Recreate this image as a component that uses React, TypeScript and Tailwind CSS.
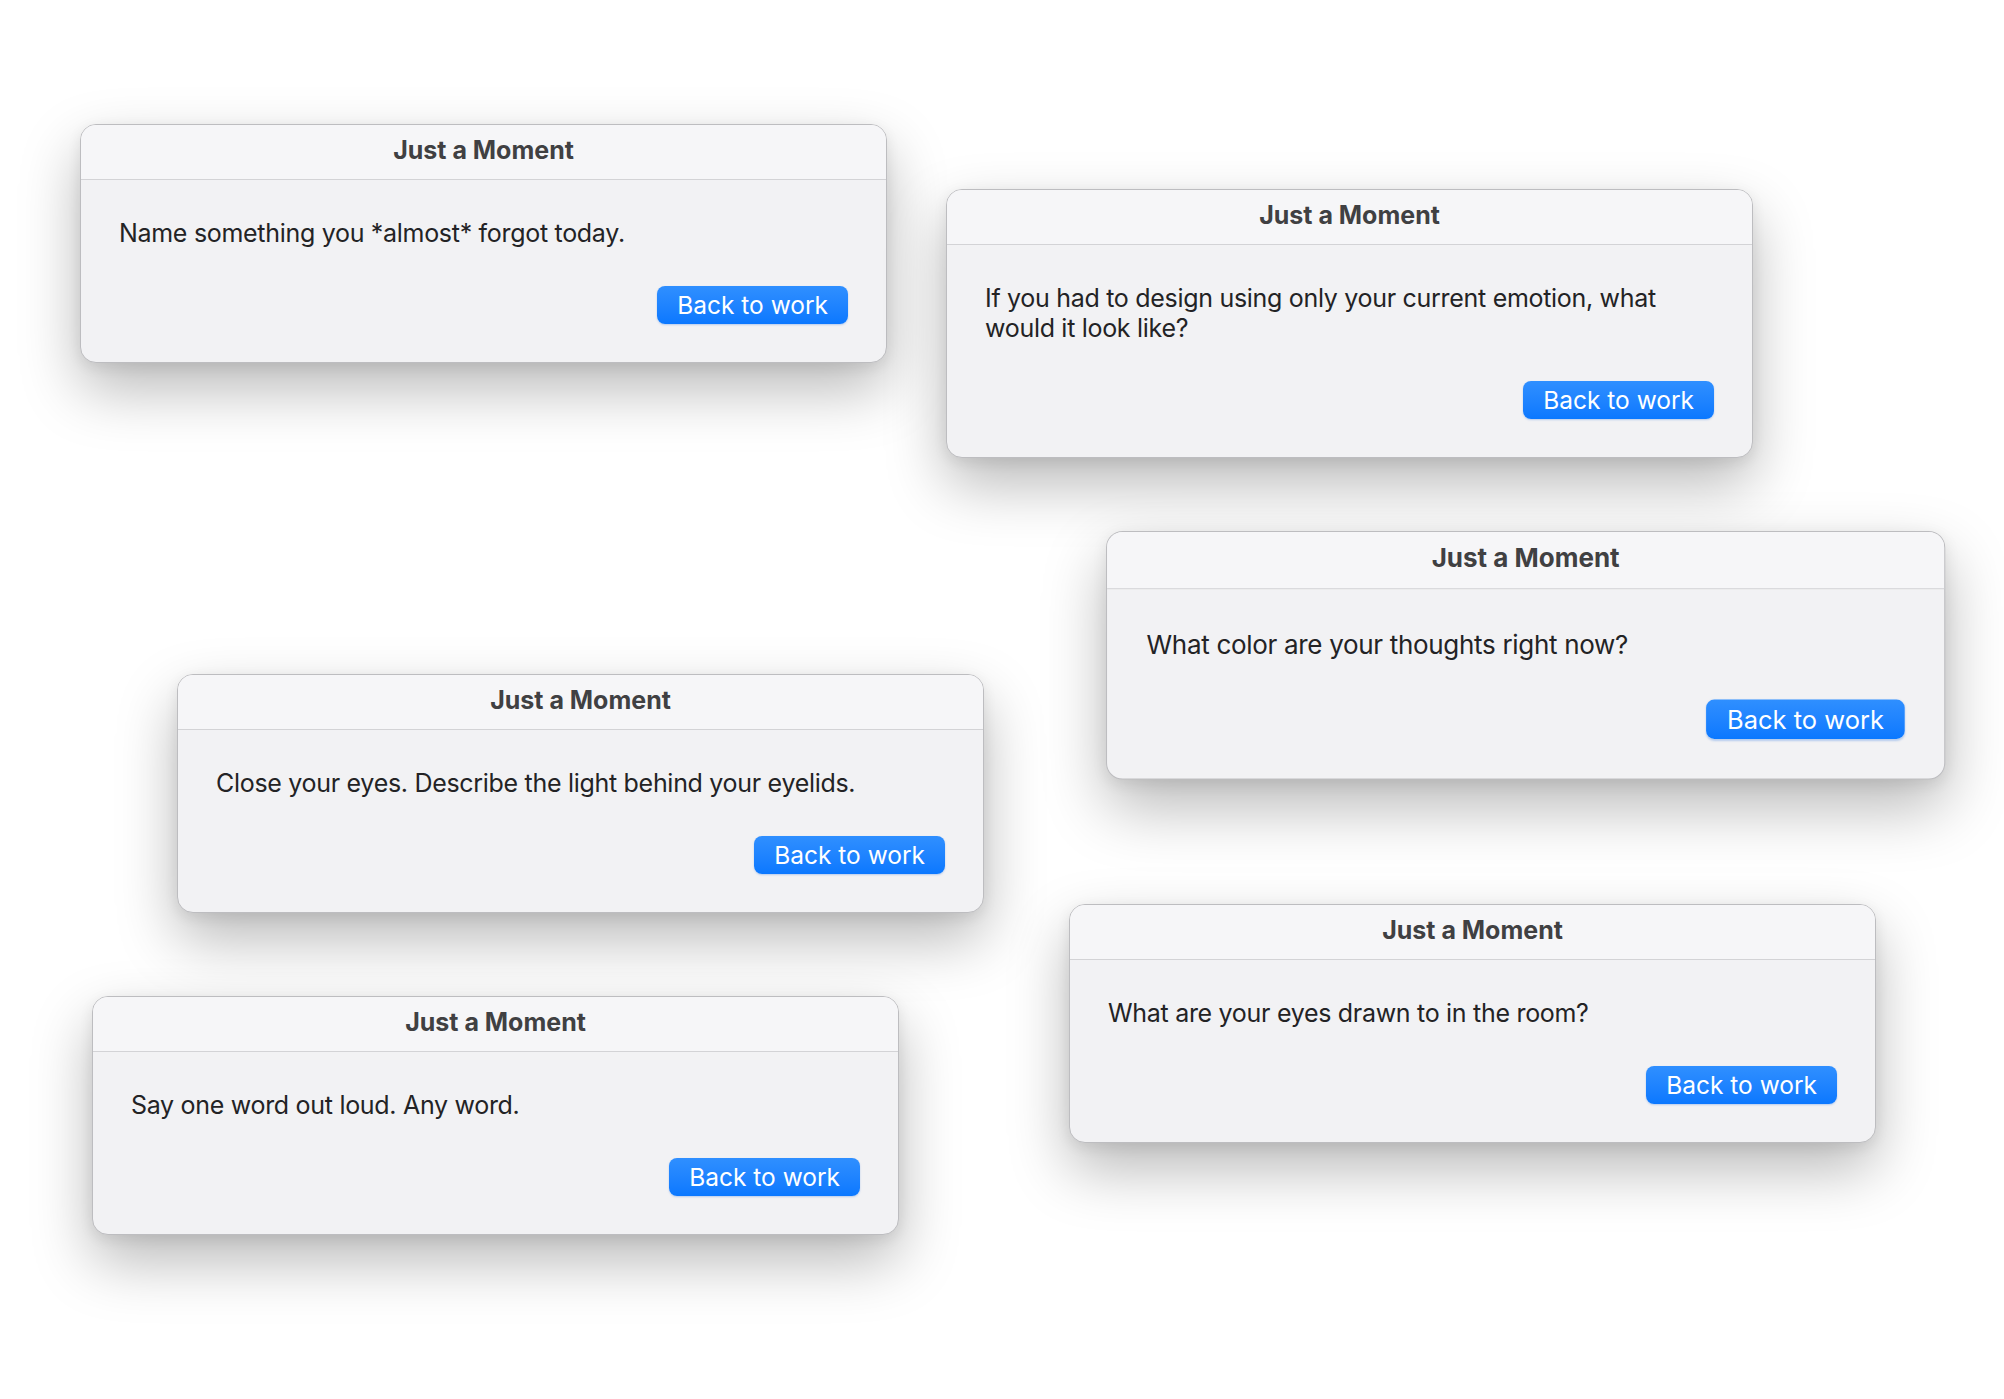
const PROMPTS = [
  { id: 1, text: "Name something you *almost* forgot today.", pos: "left-[80px] top-[124px]" },
  {
    id: 2,
    text: "If you had to design using only your current emotion, what would it look like?",
    pos: "left-[946px] top-[189px]",
  },
  { id: 3, text: "What color are your thoughts right now?", pos: "left-[1106px] top-[531px] scale-[1.04] origin-top-left" },
  { id: 4, text: "Close your eyes. Describe the light behind your eyelids.", pos: "left-[177px] top-[674px]" },
  { id: 5, text: "Say one word out loud. Any word.", pos: "left-[92px] top-[996px]" },
  { id: 6, text: "What are your eyes drawn to in the room?", pos: "left-[1069px] top-[904px]" },
];

function MomentWindow({ text, pos }: { text: string; pos: string }) {
  return (
    <div
      className={`absolute ${pos} w-[807px] rounded-[16px] border border-[#bdbdc0] bg-[#f2f2f4] overflow-hidden shadow-[0_26px_60px_rgba(0,0,0,0.28),0_4px_14px_rgba(0,0,0,0.08)]`}
    >
      {/* Title bar */}
      <div className="h-[55px] pb-[2px] flex items-center justify-center bg-[#f6f6f8] border-b border-[#d3d3d6]">
        <span className="text-[25px] font-bold text-[#404042]">Just a Moment</span>
      </div>

      {/* Body */}
      <div className="px-[38px] pt-[38px] pb-[38px] flex flex-col">
        <p className="text-[25px] leading-[30px] tracking-[-0.3px] text-[#232325]">{text}</p>
        <div className="mt-[38px] flex justify-end">
          <button className="h-[38px] px-[20px] rounded-[8px] bg-gradient-to-b from-[#2f8fff] to-[#0a78ff] text-white text-[24.5px] leading-none shadow-[0_1px_2px_rgba(0,90,220,0.25)]">
            Back to work
          </button>
        </div>
      </div>
    </div>
  );
}

export default function App() {
  return (
    <div
      className="relative w-[2004px] h-[1399px] bg-white overflow-hidden"
      style={{ fontFamily: '"Inter", "Noto Sans", sans-serif' }}
    >
      {PROMPTS.map((p) => (
        <MomentWindow key={p.id} text={p.text} pos={p.pos} />
      ))}
    </div>
  );
}
